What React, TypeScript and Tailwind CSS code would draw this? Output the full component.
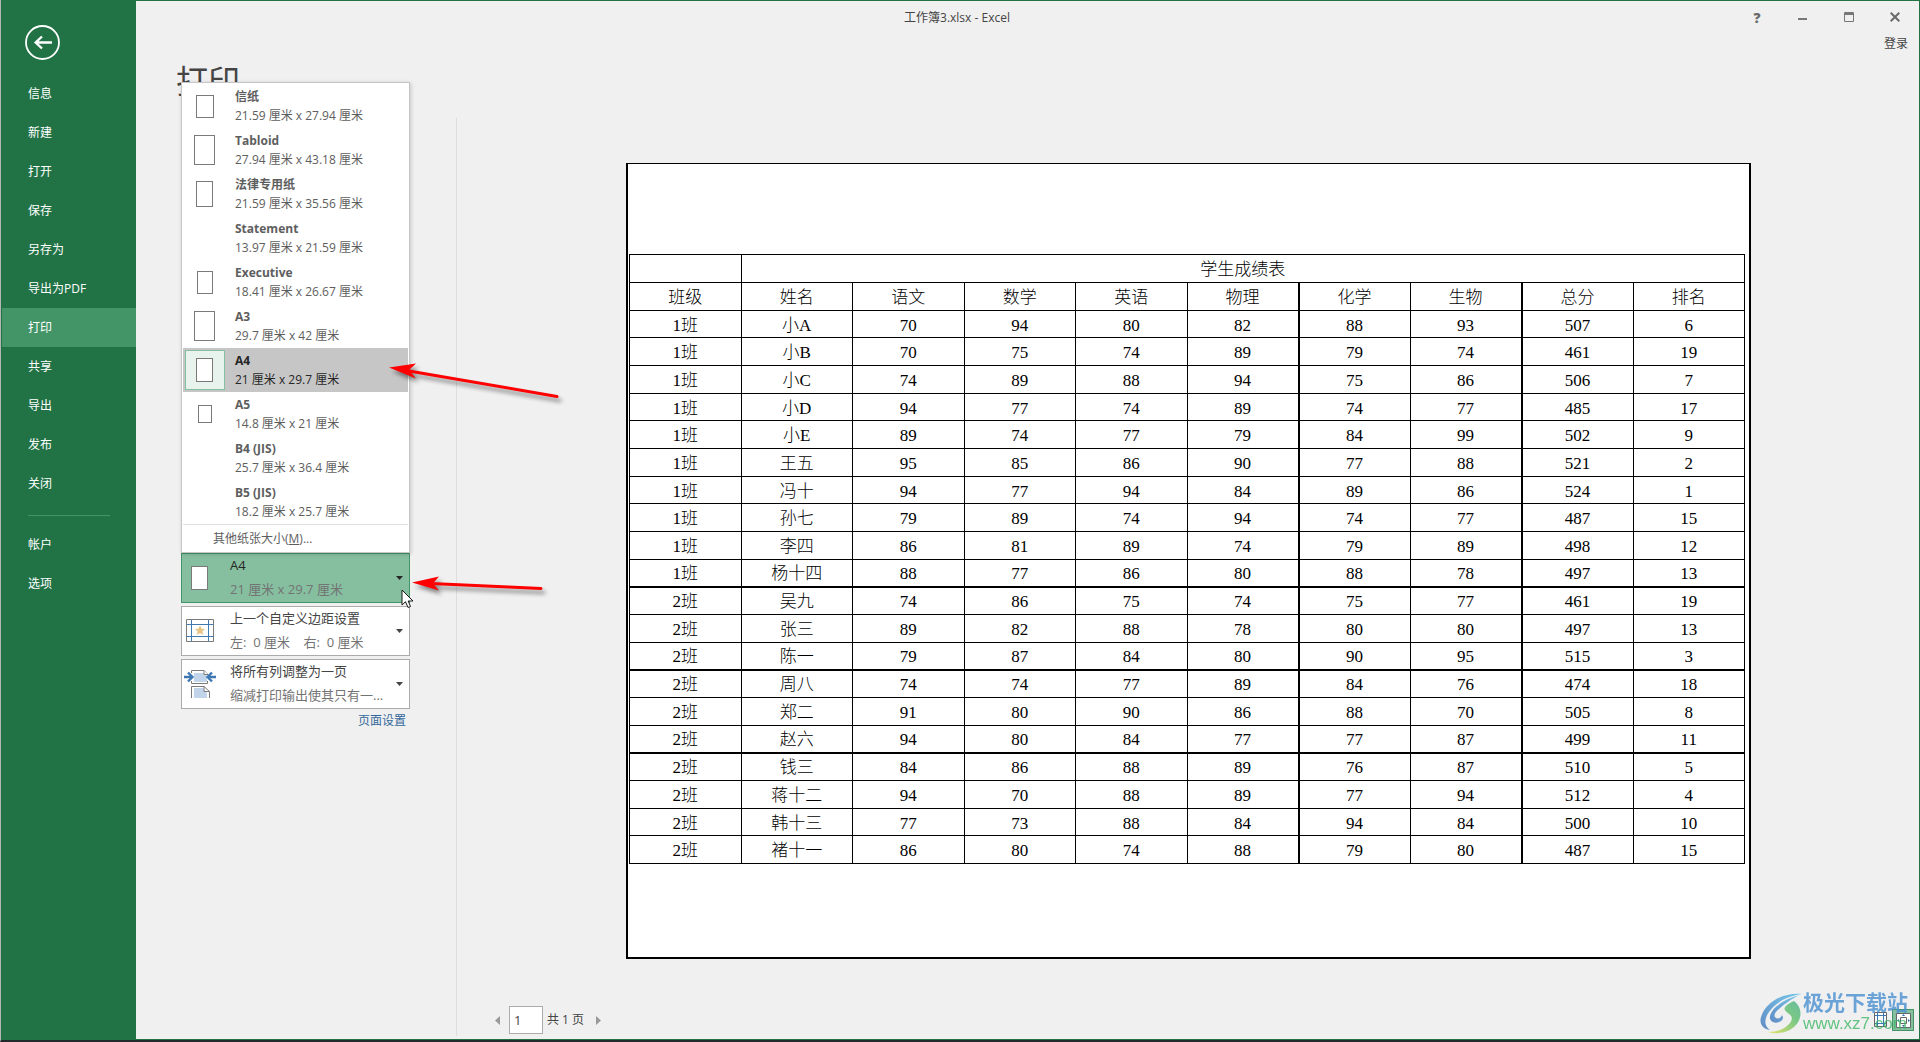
import { useState } from "react";

const uiFont = "font-['Open_Sans','Noto_Sans_CJK_SC',sans-serif]";
const sheetFont = "font-['Liberation_Serif','Noto_Sans_CJK_SC',serif]";

const mainLinks = [
  "信息",
  "新建",
  "打开",
  "保存",
  "另存为",
  "导出为PDF",
  "打印",
  "共享",
  "导出",
  "发布",
  "关闭",
];

const paperSizes = [
  { name: "信纸", size: "21.59 厘米 x 27.94 厘米", icon: "w-[18px] h-[23px]" },
  { name: "Tabloid", size: "27.94 厘米 x 43.18 厘米", icon: "w-[21px] h-[30px]" },
  { name: "法律专用纸", size: "21.59 厘米 x 35.56 厘米", icon: "w-[17px] h-[26px]" },
  { name: "Statement", size: "13.97 厘米 x 21.59 厘米", icon: "" },
  { name: "Executive", size: "18.41 厘米 x 26.67 厘米", icon: "w-[16px] h-[23px]" },
  { name: "A3", size: "29.7 厘米 x 42 厘米", icon: "w-[21px] h-[30px]" },
  { name: "A4", size: "21 厘米 x 29.7 厘米", icon: "w-[17px] h-[24px]" },
  { name: "A5", size: "14.8 厘米 x 21 厘米", icon: "w-[14px] h-[18px]" },
  { name: "B4 (JIS)", size: "25.7 厘米 x 36.4 厘米", icon: "" },
  { name: "B5 (JIS)", size: "18.2 厘米 x 25.7 厘米", icon: "" },
];

const columns = ["班级", "姓名", "语文", "数学", "英语", "物理", "化学", "生物", "总分", "排名"];

const students = [
  ["1班", "小A", 70, 94, 80, 82, 88, 93, 507, 6],
  ["1班", "小B", 70, 75, 74, 89, 79, 74, 461, 19],
  ["1班", "小C", 74, 89, 88, 94, 75, 86, 506, 7],
  ["1班", "小D", 94, 77, 74, 89, 74, 77, 485, 17],
  ["1班", "小E", 89, 74, 77, 79, 84, 99, 502, 9],
  ["1班", "王五", 95, 85, 86, 90, 77, 88, 521, 2],
  ["1班", "冯十", 94, 77, 94, 84, 89, 86, 524, 1],
  ["1班", "孙七", 79, 89, 74, 94, 74, 77, 487, 15],
  ["1班", "李四", 86, 81, 89, 74, 79, 89, 498, 12],
  ["1班", "杨十四", 88, 77, 86, 80, 88, 78, 497, 13],
  ["2班", "吴九", 74, 86, 75, 74, 75, 77, 461, 19],
  ["2班", "张三", 89, 82, 88, 78, 80, 80, 497, 13],
  ["2班", "陈一", 79, 87, 84, 80, 90, 95, 515, 3],
  ["2班", "周八", 74, 74, 77, 89, 84, 76, 474, 18],
  ["2班", "郑二", 91, 80, 90, 86, 88, 70, 505, 8],
  ["2班", "赵六", 94, 80, 84, 77, 77, 87, 499, 11],
  ["2班", "钱三", 84, 86, 88, 89, 76, 87, 510, 5],
  ["2班", "蒋十二", 94, 70, 88, 89, 77, 94, 512, 4],
  ["2班", "韩十三", 77, 73, 88, 84, 94, 84, 500, 10],
  ["2班", "褚十一", 86, 80, 74, 88, 79, 80, 487, 15],
];

// rows and columns whose rule prints two pixels thick
const heavyRows = [9, 12, 15];
const heavyCols = [6, 8];

function Sidebar({ page, onPick }) {
  const item = "h-[39px] w-full pl-[26px] text-left text-[12px] text-white";

  return (
    <aside className="w-[134px] shrink-0 bg-[#217346]">
      <button className="mt-[24px] ml-[23px] block h-[35px] w-[35px]" aria-label="返回">
        <svg viewBox="0 0 35 35" fill="none" stroke="#fff">
          <circle cx="17.5" cy="17.5" r="16.5" strokeWidth="1.8" />
          <path d="M27 17.5H11M17 11.5l-6.3 6 6.3 6" strokeWidth="2.4" />
        </svg>
      </button>
      <nav className="mt-[14px]">
        {mainLinks.map((label) => (
          <button
            key={label}
            onClick={() => onPick(label)}
            className={label === page ? `${item} bg-[#439467]` : `${item} hover:bg-[#439467]`}
          >
            {label}
          </button>
        ))}
        <hr className="mt-[12px] mr-[26px] mb-[9px] ml-[26px] border-[#439467]" />
        <button className={item}>帐户</button>
        <button className={item}>选项</button>
      </nav>
    </aside>
  );
}

function TitleBar() {
  const button = "flex h-[32px] w-[46px] items-center justify-center";

  return (
    <header>
      <div className="flex items-start pr-px">
        <div className="w-11 shrink-0" />
        <p className="flex-1 text-center text-[12px] leading-[34px] text-[#444]">工作簿3.xlsx - Excel</p>
        <button className={`${button} text-[14px] font-extrabold text-[#6a6a6a]`} aria-label="帮助">
          ?
        </button>
        <button className={button} aria-label="最小化">
          <svg width="10" height="10" fill="#777">
            <path d="M0 6h9v2H0z" />
          </svg>
        </button>
        <button className={button} aria-label="最大化">
          <svg width="10" height="10" fill="none" stroke="#777">
            <path d="M.5.5h9v9h-9zM0 1.5h10M0 2.5h10" />
          </svg>
        </button>
        <button className={button} aria-label="关闭">
          <svg width="10" height="10" fill="none" stroke="#6a6a6a" strokeWidth="2">
            <path d="M.7.7l8.6 8.6M9.3.7L.7 9.3" />
          </svg>
        </button>
      </div>
      <div className="flex justify-end pr-[11px]">
        <button className="text-[12px] leading-[18px] text-[#444]">登录</button>
      </div>
    </header>
  );
}

function PaperMenu({ selected, onPick }) {
  return (
    <div
      role="menu"
      className="absolute right-0 bottom-full left-0 z-10 border border-[#c6c6c6] bg-white px-px pt-px shadow-[1px_1px_4px_rgba(0,0,0,0.18)]"
    >
      {paperSizes.map((paper) => {
        const on = paper.name === selected;
        return (
          <button
            key={paper.name}
            role="menuitem"
            onClick={() => onPick(paper.name)}
            className={`flex h-[44px] w-full items-center pl-[2px] text-left text-[12px] leading-[19px] ${
              on ? "bg-[#c6c6c6] text-[#262626]" : "text-[#5e5e5e] hover:bg-[#e6e6e6]"
            }`}
          >
            <span
              className={`flex h-[40px] w-[40px] items-center justify-center border pr-px ${
                on ? "border-[#86bfa0] bg-[#e9f3ee]" : "border-transparent"
              }`}
            >
              {paper.icon && <i className={`${paper.icon} border border-[#7a7a7a] bg-white`} />}
            </span>
            <span className="ml-[10px]">
              <b className="block">{paper.name}</b>
              <span className="block">{paper.size}</span>
            </span>
          </button>
        );
      })}
      <button
        role="menuitem"
        className="block h-[28px] w-full border-t border-[#e1e1e1] pl-[30px] text-left text-[12px] text-[#5e5e5e]"
      >
        其他纸张大小(<u>M</u>)...
      </button>
    </div>
  );
}

function SettingButton({ title, detail, active = false, onClick, children }) {
  return (
    <button
      onClick={onClick}
      className={`flex h-[50px] w-full items-center border text-left text-[13px] ${
        active ? "border-[#439467] bg-[#86bfa0]" : "border-[#ababab] bg-white"
      }`}
    >
      <span className="flex w-[36px] shrink-0 justify-center">{children}</span>
      <span className="ml-[12px] min-w-0 flex-1 pb-[2px] leading-[24px] whitespace-pre">
        <span className={`block ${active ? "text-[#262626]" : "text-[#444]"}`}>{title}</span>
        <span className="block text-[#737373]">{detail}</span>
      </span>
      <svg className="mr-[6px] shrink-0" width="7" height="4" fill={active ? "#262626" : "#444"}>
        <path d="M0 0h7L3.5 4z" />
      </svg>
    </button>
  );
}

function MarginsIcon() {
  return (
    <svg width="28" height="24" fill="none">
      <path d="M.5.5h27v22H.5z" fill="#fff" stroke="#7a7a7a" />
      <path d="M5.5 1v21M22.5 1v21M1 5.5h26M1 17.5h26" stroke="#3e78b3" />
      <path d="M14 6.3l1.5 3.4 3.6.2-2.8 2.4 1 3.7-3.3-2-3.3 2 1-3.7-2.8-2.4 3.6-.2z" fill="#eac282" />
    </svg>
  );
}

function FitColumnsIcon() {
  return (
    <svg width="32" height="30" fill="none">
      <path d="M10 4h10l3 3v6H10zM10 19h9l4 5v5H10z" fill="#c1d4ea" />
      <path d="M7.5 4V1.500H20l4 4M7.500 12v2.500h16V12" stroke="#7a7a7a" />
      <path d="M20 1.500v4h4M20 17.500v5h5.500" fill="#fff" stroke="#7a7a7a" />
      <path d="M7.500 29V17.500H20l5.500 5V29" stroke="#7a7a7a" />
      <path d="M0 8h7M4 3.500L8.500 8 4 12.500M32 8h-7M28 3.500L23.500 8l4.500 4.500" stroke="#3e78b3" strokeWidth="2.400" />
    </svg>
  );
}

function Pointers() {
  return (
    <svg
      className="pointer-events-none absolute bottom-0 left-[200px] z-20 drop-shadow-[3px_4px_2px_rgba(0,0,0,0.45)]"
      width="190"
      height="260"
    >
      <path d="M28 28L176 53.500" stroke="#f00" strokeWidth="3" strokeLinecap="round" />
      <path d="M8 24.500l27-4-7 6.500 7 8.500z" fill="#f00" />
      <path d="M50 240.500L160 245.500" stroke="#f00" strokeWidth="3" strokeLinecap="round" />
      <path d="M31 239.500l27-6-6 7 6 7z" fill="#f00" />
    </svg>
  );
}

function Cursor() {
  return (
    <svg className="pointer-events-none absolute top-[36px] left-[220px] z-20" width="13" height="20">
      <path d="M1 1v15l3.500-3.300L7 18.500l2.500-1L7.200 12H12z" fill="#fff" stroke="#1b1b1b" />
    </svg>
  );
}

function Settings() {
  const [paper, setPaper] = useState("A4");
  const [menuOpen, setMenuOpen] = useState(true);
  const current = paperSizes.find((p) => p.name === paper);

  return (
    <section className="mb-[3px] w-[321px] shrink-0 border-r border-[#dedede] pt-[435px] pr-[46px] pl-[45px]">
      <div className="relative">
        {menuOpen && (
          <PaperMenu
            selected={paper}
            onPick={(name) => {
              setPaper(name);
              setMenuOpen(false);
            }}
          />
        )}
        <SettingButton title={current.name} detail={current.size} active onClick={() => setMenuOpen(!menuOpen)}>
          <i className="mr-px h-[24px] w-[17px] border border-[#7a7a7a] bg-white" />
        </SettingButton>
        <Cursor />
        <Pointers />
      </div>
      <div className="mt-[3px] space-y-[3px]">
        <SettingButton title="上一个自定义边距设置" detail="左:  0 厘米    右:  0 厘米">
          <MarginsIcon />
        </SettingButton>
        <SettingButton title="将所有列调整为一页" detail="缩减打印输出使其只有一...">
          <FitColumnsIcon />
        </SettingButton>
      </div>
      <div className="mt-[3px] pr-[4px] text-right text-[12px] leading-[18px]">
        <a href="#page-setup" className="text-[#33689b] hover:underline">
          页面设置
        </a>
      </div>
    </section>
  );
}

function SheetTable() {
  const cell = "border border-black p-0 pt-[2px] font-light";

  return (
    <table className={`w-full table-fixed border-collapse text-center text-[17px] leading-[23px] text-black ${sheetFont}`}>
      <thead>
        <tr className="h-[28px]">
          <th className={cell} />
          <th className={cell} colSpan={9}>
            学生成绩表
          </th>
        </tr>
        <tr className="h-[28px]">
          {columns.map((name, c) => (
            <th key={name} className={`${cell} ${heavyCols.includes(c) ? "border-l-2" : ""}`}>
              {name}
            </th>
          ))}
        </tr>
      </thead>
      <tbody>
        {students.map((row, r) => (
          <tr key={row[1]} className={r % 3 === 0 ? "h-[27px]" : "h-[28px]"}>
            {row.map((value, c) => (
              <td
                key={c}
                className={`${cell} ${heavyCols.includes(c) ? "border-l-2" : ""} ${
                  heavyRows.includes(r) ? "border-b-2" : ""
                }`}
              >
                {value}
              </td>
            ))}
          </tr>
        ))}
      </tbody>
    </table>
  );
}

function Pager() {
  const [value, setValue] = useState("1");

  return (
    <div className="flex items-center pl-[38px] text-[12px] text-[#444]">
      <button aria-label="上一页">
        <svg width="5" height="9" fill="#9a9a9a">
          <path d="M5 0v9L0 4.500z" />
        </svg>
      </button>
      <input
        value={value}
        onChange={(e) => setValue(e.target.value)}
        aria-label="页码"
        className="ml-[9px] h-[28px] w-[34px] border border-[#ababab] bg-white pl-[4px] text-[13px]"
      />
      <span className="ml-[4px]">共 1 页</span>
      <button className="ml-[12px]" aria-label="下一页">
        <svg width="5" height="9" fill="#9a9a9a">
          <path d="M0 0v9l5-4.500z" />
        </svg>
      </button>
    </div>
  );
}

function ViewButtons() {
  return (
    <div className="flex items-center gap-[4px] pr-[5px]">
      <button aria-label="显示边距">
        <svg width="14" height="16" fill="none">
          <path d="M.5.5h12v14H.5z" fill="#fff" stroke="#666" />
          <path d="M3.500 1v13M9.500 1v13M1 3.500h11M1 11.500h11" stroke="#3e78b3" />
        </svg>
      </button>
      <button
        className="flex h-[22px] w-[22px] items-center justify-center border border-[#439467] bg-[#86bfa0]"
        aria-label="缩放到页面"
      >
        <svg width="15" height="15" fill="none">
          <path d="M.5.5h14v14H.5z" fill="#fff" stroke="#666" />
          <path d="M4.500 4.500h6v6h-6z" stroke="#666" />
          <path d="M6 3l1.500-2L9 3zM6 12l1.500 2L9 12zM3 6L1 7.500 3 9zM12 6l2 1.500L12 9z" fill="#2f6db0" />
        </svg>
      </button>
    </div>
  );
}

function Watermark() {
  return (
    <div className="pointer-events-none absolute right-[11px] bottom-[5px] flex items-center opacity-80">
      <svg width="42" height="42" viewBox="0 0 42 42">
        <defs>
          <linearGradient id="blue" x1="0" y1="1" x2="1" y2="0">
            <stop offset="0" stopColor="#3f74bb" />
            <stop offset="1" stopColor="#56bdea" />
          </linearGradient>
          <linearGradient id="green" x1="0" y1="1" x2="1" y2="0">
            <stop offset="0" stopColor="#e3e04a" />
            <stop offset=".6" stopColor="#5fbf68" />
            <stop offset="1" stopColor="#45b08a" />
          </linearGradient>
        </defs>
        <path d="M42 2C25 0 6 9 1 25c-2 7 2 12 9 13-6-4-6-11-1-18C15 11 27 4 42 2z" fill="url(#blue)" />
        <path d="M39 3C25 7 12 15 10 24c-1 5 4 8 9 6 4-1 5-5 3-7-1 3-4 4-6 3-3-2-1-6 3-9 5-5 13-10 20-14z" fill="url(#blue)" />
        <path d="M34 9c8 6 9 17 1 25-6 6-17 9-27 6 11 0 18-4 22-9 3-4 2-7-1-9-4-3-6-5-3-8 2-2 5-4 8-5z" fill="url(#green)" />
      </svg>
      <div className="ml-px leading-[21px]">
        <p className="text-[21px] font-bold text-[#4a90d2]">极光下载站</p>
        <p className="font-['Liberation_Sans',sans-serif] text-[17px] text-[#3fb866]">www.xz7.com</p>
      </div>
    </div>
  );
}

export default function App() {
  const [page, setPage] = useState("打印");

  return (
    <div className={`border-b-2 border-l border-b-[#222b2b] border-l-[#b5b5b5] ${uiFont}`}>
      <div className="flex min-h-[calc(100vh-2px)] border border-[#217346] bg-[#f0f0f0]">
        <Sidebar page={page} onPick={setPage} />
        <main className="relative flex min-w-0 flex-1 flex-col">
          <TitleBar />
          <h1 className="pb-[10px] pl-[40px] text-[32px] leading-[55px] text-[#444]">打印</h1>
          <div className="flex flex-1">
            <Settings />
            <section className="flex min-w-0 flex-1 flex-col">
              <div className="mr-[168px] ml-[169px] mt-[45px] border-2 border-t border-black bg-white pt-[90px] pr-[4px] pb-[93px] pl-px">
                <SheetTable />
              </div>
              <div className="mt-auto flex items-center justify-between pt-4 pb-[5px]">
                <Pager />
                <ViewButtons />
              </div>
            </section>
          </div>
          <Watermark />
        </main>
      </div>
    </div>
  );
}
